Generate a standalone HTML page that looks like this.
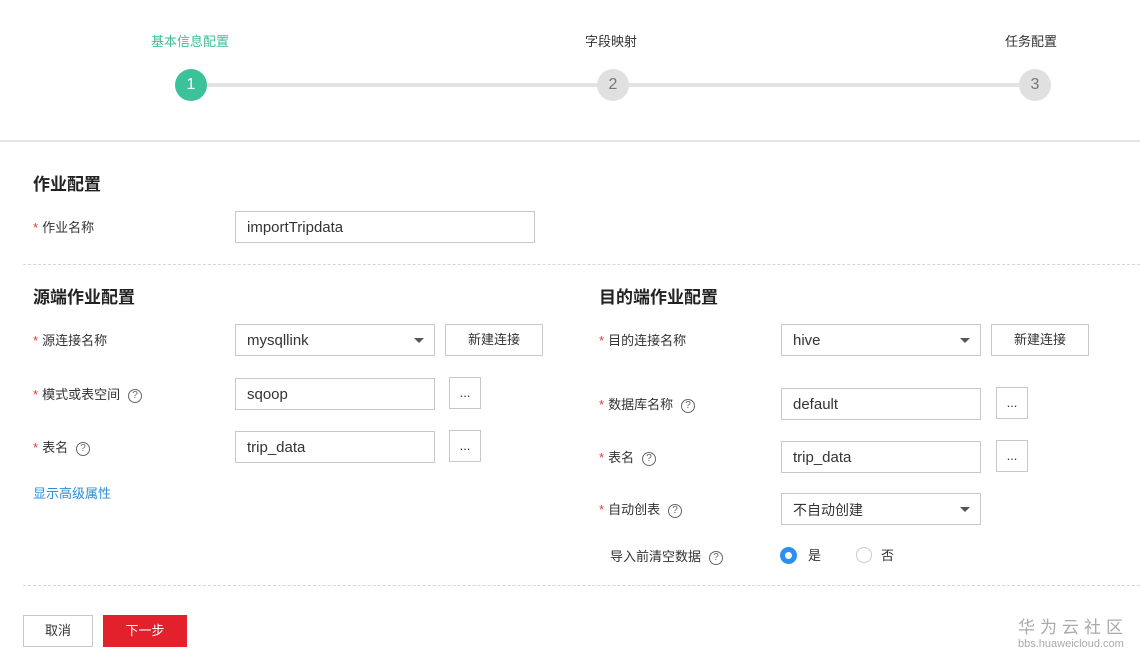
<!DOCTYPE html>
<html><head><meta charset="utf-8"><style>
*{margin:0;padding:0;box-sizing:border-box}
body{width:1140px;height:659px;background:#fff;position:relative;overflow:hidden;font-family:"Liberation Sans","Noto Sans CJK SC",sans-serif;font-size:14px;color:#333}
.a{position:absolute;white-space:nowrap;line-height:18px}
.lbl{font-size:13px;color:#333;margin-top:1px}
.lbl b{color:#e4393c;font-weight:normal;margin-right:4px}
.h{font-size:17px;font-weight:bold;color:#222;line-height:22px;margin-top:2px}
.in{position:absolute;height:32px;border:1px solid #c8c8c8;background:#fff;padding-left:11px;padding-top:7px;line-height:18px;font-size:15px;color:#333;white-space:nowrap}
.btn{position:absolute;height:32px;border:1px solid #c8c8c8;background:#fff;text-align:center;padding-top:6px;line-height:18px;font-size:13px;color:#333}
.dd:after{content:"";position:absolute;right:10px;top:13px;border-left:5px solid transparent;border-right:5px solid transparent;border-top:5px solid #555}
.q{display:inline-block;width:14px;height:14px;border:1.3px solid #666;border-radius:50%;font-size:10px;line-height:12px;text-align:center;color:#666;margin-left:8px;vertical-align:1px}
.c{position:absolute;width:32px;height:32px;border-radius:50%;text-align:center;line-height:32px;font-size:16px;background:#e0e0e0;color:#777}
.dash{position:absolute;left:23px;width:1117px;border-top:1px dashed #d6d6d6}
</style></head><body>
<div class="a" style="left:151px;top:33px;font-size:13px;color:#3dbd9a">基本信息配置</div>
<div class="a" style="left:585px;top:33px;font-size:13px;color:#333">字段映射</div>
<div class="a" style="left:1005px;top:33px;font-size:13px;color:#333">任务配置</div>
<div class="a" style="left:191px;top:83px;width:844px;height:4px;background:#e3e3e3"></div>
<div class="c" style="left:175px;top:69px;background:#3cc29b;color:#fff">1</div>
<div class="c" style="left:597px;top:69px">2</div>
<div class="c" style="left:1019px;top:69px">3</div>
<div class="a" style="left:0;top:140px;width:1140px;height:2px;background:#e4e4e4"></div>

<div class="a h" style="left:33px;top:172px">作业配置</div>
<div class="a lbl" style="left:33px;top:218px"><b>*</b>作业名称</div>
<div class="in" style="left:235px;top:211px;width:300px">importTripdata</div>
<div class="dash" style="top:264px"></div>

<div class="a h" style="left:33px;top:285px">源端作业配置</div>
<div class="a lbl" style="left:33px;top:331px"><b>*</b>源连接名称</div>
<div class="in dd" style="left:235px;top:324px;width:200px">mysqllink</div>
<div class="btn" style="left:445px;top:324px;width:98px">新建连接</div>
<div class="a lbl" style="left:33px;top:385px"><b>*</b>模式或表空间<span class="q">?</span></div>
<div class="in" style="left:235px;top:378px;width:200px">sqoop</div>
<div class="btn" style="left:449px;top:377px;width:32px">...</div>
<div class="a lbl" style="left:33px;top:438px"><b>*</b>表名<span class="q">?</span></div>
<div class="in" style="left:235px;top:431px;width:200px">trip_data</div>
<div class="btn" style="left:449px;top:430px;width:32px">...</div>
<div class="a" style="left:33px;top:485px;font-size:13px;color:#2a8fd6">显示高级属性</div>

<div class="a h" style="left:599px;top:285px">目的端作业配置</div>
<div class="a lbl" style="left:599px;top:331px"><b>*</b>目的连接名称</div>
<div class="in dd" style="left:781px;top:324px;width:200px">hive</div>
<div class="btn" style="left:991px;top:324px;width:98px">新建连接</div>
<div class="a lbl" style="left:599px;top:395px"><b>*</b>数据库名称<span class="q">?</span></div>
<div class="in" style="left:781px;top:388px;width:200px">default</div>
<div class="btn" style="left:996px;top:387px;width:32px">...</div>
<div class="a lbl" style="left:599px;top:448px"><b>*</b>表名<span class="q">?</span></div>
<div class="in" style="left:781px;top:441px;width:200px">trip_data</div>
<div class="btn" style="left:996px;top:440px;width:32px">...</div>
<div class="a lbl" style="left:599px;top:500px"><b>*</b>自动创表<span class="q">?</span></div>
<div class="in dd" style="left:781px;top:493px;width:200px;font-size:14px">不自动创建</div>
<div class="a lbl" style="left:610px;top:547px">导入前清空数据<span class="q">?</span></div>
<div class="a" style="left:780px;top:547px;width:17px;height:17px;border-radius:50%;background:#2d8ff0"><div style="position:absolute;left:5px;top:5px;width:7px;height:7px;border-radius:50%;background:#fff"></div></div>
<div class="a" style="left:808px;top:547px;font-size:13px">是</div>
<div class="a" style="left:856px;top:547px;width:16px;height:16px;border-radius:50%;border:1px solid #ccc"></div>
<div class="a" style="left:881px;top:547px;font-size:13px">否</div>
<div class="dash" style="top:585px"></div>

<div class="btn" style="left:23px;top:615px;width:70px;height:32px">取消</div>
<div class="btn" style="left:103px;top:615px;width:84px;height:32px;background:#e3212d;border-color:#e3212d;color:#fff">下一步</div>
<div class="a" style="left:1018px;top:618px;font-size:17px;color:#aaa;letter-spacing:5px;line-height:20px">华为云社区</div>
<div class="a" style="left:1018px;top:638px;font-size:11px;color:#aaa;line-height:12px">bbs.huaweicloud.com</div>
</body></html>
